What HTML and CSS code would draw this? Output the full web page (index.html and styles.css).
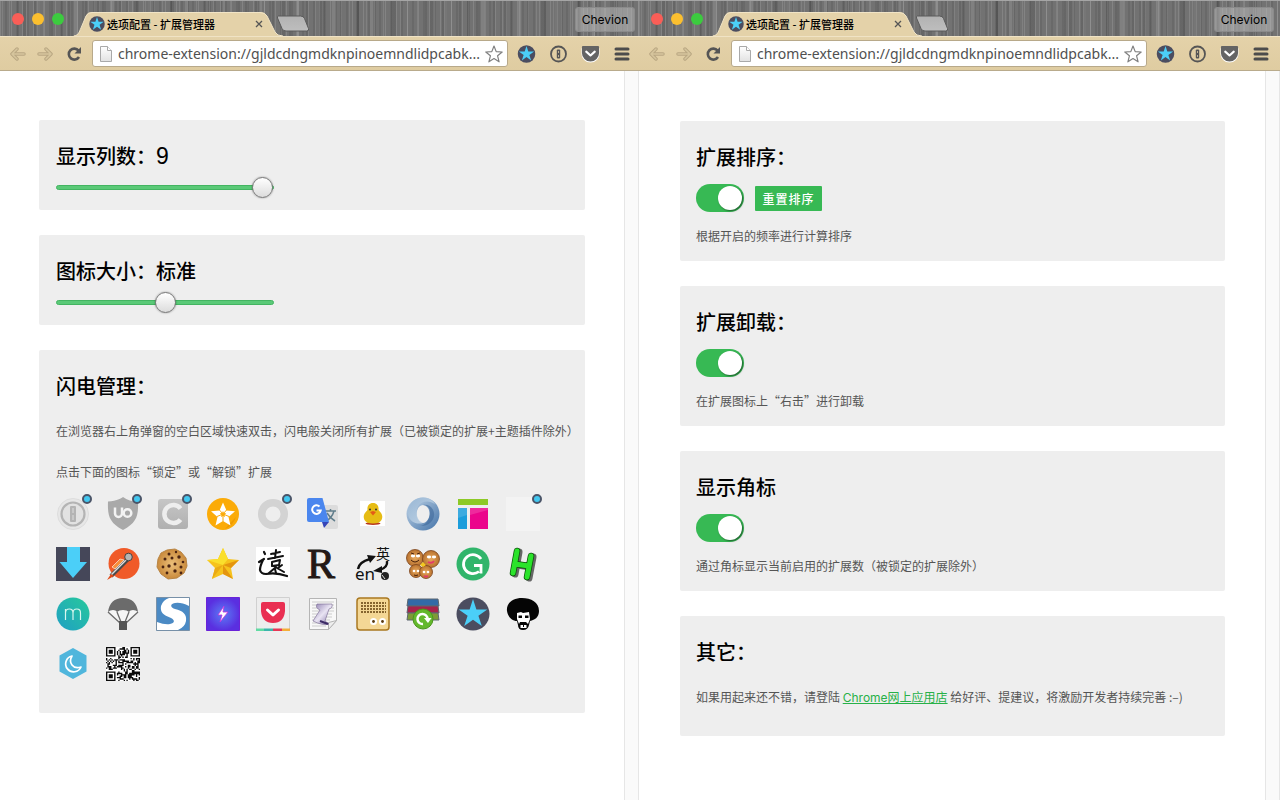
FILE: index.html
```html
<!DOCTYPE html>
<html lang="zh-CN">
<head>
<meta charset="utf-8">
<meta name="viewport" content="width=device-width, initial-scale=1">
<title>选项配置 - 扩展管理器</title>
<link rel="stylesheet" href="styles.css">
</head>
<body>
<svg class="defs" aria-hidden="true">
  <defs>
    <linearGradient id="g-page" x1="0" y1="0" x2="0" y2="1"><stop offset="0" stop-color="#fff"/><stop offset="1" stop-color="#e2e2e2"/></linearGradient>
    <linearGradient id="g-ring" x1="0" y1="0" x2="1" y2="1"><stop offset="0" stop-color="#c3d6e8"/><stop offset="1" stop-color="#4373a8"/></linearGradient>
    <linearGradient id="g-ring2" x1="0" y1="0" x2="1" y2="1"><stop offset="0" stop-color="#8fb0d0"/><stop offset="1" stop-color="#dbe8f3"/></linearGradient>
    <linearGradient id="g-m" x1="0" y1="1" x2="1" y2="0"><stop offset="0" stop-color="#1f9fc4"/><stop offset="1" stop-color="#27c99b"/></linearGradient>
    <radialGradient id="g-bolt"><stop offset="0" stop-color="#5b7df5"/><stop offset="1" stop-color="#5a2fe0"/></radialGradient>
    <linearGradient id="g-gray" x1="0" y1="0" x2="0" y2="1"><stop offset="0" stop-color="#c6c6c6"/><stop offset="1" stop-color="#b0b0b0"/></linearGradient>
    <radialGradient id="g-cookie"><stop offset="0" stop-color="#ecc07a"/><stop offset="1" stop-color="#c98a3c"/></radialGradient>
    <radialGradient id="g-face"><stop offset="0" stop-color="#e8a85c"/><stop offset="1" stop-color="#b8722f"/></radialGradient>
    <linearGradient id="g-scroll" x1="0" y1="0" x2="1" y2="1"><stop offset="0" stop-color="#8e7fb0"/><stop offset=".5" stop-color="#e9e4f3"/><stop offset="1" stop-color="#7a6aa0"/></linearGradient>
    <linearGradient id="g-newtab" x1="0" y1="0" x2="0" y2="1"><stop offset="0" stop-color="#b2b2b2"/><stop offset="1" stop-color="#bebebe"/></linearGradient>
  </defs>
  <symbol id="star-badge" viewBox="0 0 34 34">
    <circle cx="17" cy="17" r="16.500" fill="#4b4d60"/>
    <path fill="#4bcff8" d="M17 2l3.400 10.400h10.900l-8.900 6.400 3.400 10.300L17 22.700l-8.800 6.400 3.400-10.300-8.900-6.400h10.900z"/>
  </symbol>
  <symbol id="tab-shape" viewBox="0 0 210 24">
    <path fill="#e4d2a9" d="M0 24C6 23 6 20 8 16L13 4Q14.500 0 19 0H187Q192 0 194 4L202 20Q204 24 210 24Z"/>
    <path fill="none" stroke="#f1e4c6" d="M1 24C6 23 6 20 8 16L13 4Q14.500 .5 19 .5H187Q192 .5 194 4L202 20Q204 24 210 24"/>
  </symbol>
  <symbol id="new-tab" viewBox="0 0 34 18">
    <path fill="url(#g-newtab)" stroke="#5a5a5a" d="M2.500 1h22q3 0 4 2.500l4 10q1 2.500-2 2.500H10q-3 0-4-2.500L1.500 3Q1 1 2.500 1z"/>
  </symbol>
  <symbol id="arrow-left" viewBox="0 0 16 14">
    <path fill="none" stroke="#b9a782" stroke-width="3.500" stroke-linecap="round" stroke-linejoin="round" d="M7 2L2 7l5 5M3 7h11"/>
    <path fill="none" stroke="#d6c59d" stroke-width="1.500" stroke-linecap="round" stroke-linejoin="round" d="M7 2L2 7l5 5M3 7h11"/>
  </symbol>
  <symbol id="reload" viewBox="0 0 16 16">
    <path fill="none" stroke="#555" stroke-width="2.600" d="M12.600 4.600A5.500 5.500 0 1 0 13 11"/>
    <path fill="#555" d="M15 1v6.500H8.500z"/>
  </symbol>
  <symbol id="page-icon" viewBox="0 0 12 16">
    <path fill="url(#g-page)" stroke="#a9a9a9" d="M.5.500h7l4 4v11H.5z"/><path fill="#fff" stroke="#a9a9a9" d="M7.500.500v4h4"/>
  </symbol>
  <symbol id="bookmark" viewBox="0 0 18 18">
    <path fill="#fff" stroke="#808080" stroke-width="1.200" stroke-linejoin="round" d="M9 1l2.200 5.600 6 .4-4.600 3.800 1.500 6L9 13.500 3.900 16.800l1.500-6L.8 7l6-.4z"/>
  </symbol>
  <symbol id="onepass" viewBox="0 0 18 18">
    <circle cx="9" cy="9" r="7.500" fill="none" stroke="#555" stroke-width="1.800"/><rect x="7.300" y="4.500" width="3.400" height="9" rx="1" fill="#555"/><path d="M9 6v2M9 10v2" stroke="#d8c69e" stroke-width=".8"/>
  </symbol>
  <symbol id="pocket-bar" viewBox="0 0 20 18">
    <path fill="#fff" d="M.5 3h19v6a9.500 9 0 0 1-19 0z"/><path fill="#646464" d="M1 1.500Q1 .5 2 .5h16q1 0 1 1V8a9 9 0 0 1-18 0z"/><path fill="none" stroke="#fff" stroke-width="2.200" stroke-linecap="round" stroke-linejoin="round" d="M5.500 6.500L10 10.500l4.500-4"/>
  </symbol>
  <symbol id="menu" viewBox="0 0 16 14"><path stroke="#4c4c4c" stroke-width="3" stroke-linecap="round" d="M2 2h12M2 7h12M2 12h12"/></symbol>
</svg>

<main class="desktop">
  <section class="window window-left">
    <header class="titlebar">
      <div class="lights"><span class="light red"></span><span class="light yellow"></span><span class="light green"></span></div>
      <div class="tab">
        <svg class="tab-bg"><use href="#tab-shape"/></svg>
        <svg class="favicon"><use href="#star-badge"/></svg>
        <span class="tab-title">选项配置 - 扩展管理器</span>
        <button class="tab-close" aria-label="关闭标签页"><svg viewBox="0 0 8 8"><path d="M1 1l6 6M7 1L1 7" stroke="#555" stroke-width="1.300"/></svg></button>
      </div>
      <button class="new-tab" aria-label="新标签页"><svg><use href="#new-tab"/></svg></button>
      <button class="profile">Chevion</button>
    </header>
    <nav class="toolbar">
      <button class="nav" aria-label="后退"><svg><use href="#arrow-left"/></svg></button>
      <button class="nav forward" aria-label="前进"><svg><use href="#arrow-left"/></svg></button>
      <button class="reload" aria-label="重新加载"><svg><use href="#reload"/></svg></button>
      <div class="omnibox">
        <svg class="page-icon"><use href="#page-icon"/></svg>
        <input class="url" type="text" aria-label="地址" value="chrome-extension://gjldcdngmdknpinoemndlidpcabk..." readonly>
        <button class="bookmark" aria-label="收藏"><svg><use href="#bookmark"/></svg></button>
      </div>
      <div class="extensions">
        <button class="ext" aria-label="扩展管理器"><svg><use href="#star-badge"/></svg></button>
        <button class="ext" aria-label="1Password"><svg><use href="#onepass"/></svg></button>
        <button class="ext" aria-label="Pocket"><svg><use href="#pocket-bar"/></svg></button>
        <button class="menu" aria-label="菜单"><svg><use href="#menu"/></svg></button>
      </div>
    </nav>
    <div class="viewport">
      <div class="page">
        <section class="card slider-card">
          <h2><label for="columns">显示列数：<span class="number">9</span></label></h2>
          <input class="slider" id="columns" type="range" min="1" max="9" value="9">
        </section>
        <section class="card slider-card">
          <h2><label for="size">图标大小：标准</label></h2>
          <input class="slider" id="size" type="range" min="0" max="2" value="1">
        </section>
        <section class="card icons-card">
          <h2>闪电管理：</h2>
          <p>在浏览器右上角弹窗的空白区域快速双击，闪电般关闭所有扩展（已被锁定的扩展+主题插件除外）</p>
          <p>点击下面的图标“锁定”或“解锁”扩展</p>
          <div class="icons">
            <button class="app" aria-label="1Password"><svg viewBox="0 0 34 34"><circle cx="17" cy="17" r="15.500" fill="#e7e7e7" stroke="#ddd"/><circle cx="17" cy="17" r="11.500" fill="#e2e2e2" stroke="#b4b4b4" stroke-width="2.200"/><rect x="14" y="9" width="6" height="16" rx="1" fill="#b4b4b4"/><path d="M17 11v5M17 18v5" stroke="#ddd"/></svg><span class="lock"></span></button>
            <button class="app" aria-label="uBlock"><svg viewBox="0 0 34 34"><path fill="#a9a9a9" d="M17 0q6 4.500 15 4.500c.5 14-1 21-15 28.500C3 25.500 1.500 18.500 2 4.500 11 4.500 17 0 17 0z"/><path fill="none" stroke="#f3f3f3" stroke-width="2.500" d="M9 10.500v6a3.500 3.500 0 0 0 7 0v-6"/><circle cx="21.500" cy="16" r="3.800" fill="none" stroke="#f3f3f3" stroke-width="2.500"/></svg><span class="lock"></span></button>
            <button class="app" aria-label="C"><svg viewBox="0 0 34 34"><rect x="2" y="2" width="30" height="30" rx="3" fill="url(#g-gray)"/><path fill="none" stroke="#eee" stroke-width="4.500" d="M24.500 11.500a9 9 0 1 0 0 11"/></svg><span class="lock"></span></button>
            <button class="app" aria-label="星标"><svg viewBox="0 0 34 34"><circle cx="17" cy="17" r="16" fill="#fbab08"/><path fill="#ef9b00" d="M24 26l6-6q-3 9-11 12z"/><path fill="#fff" d="M17 5.500l3.500 8 8.500.8-6.500 5.700 2 8.500L17 24l-7.500 4.500 2-8.500L5 14.300l8.500-.8z"/><path stroke="#fbab08" stroke-width="1" d="M17 17l-4-4.500M17 17l4-4.500M17 17l6 2.500M17 17v7.500M17 17l-6 2.500"/><path fill="#fbab08" d="M17 14l1 2 2.200.3-1.600 1.500.4 2.200-2-1-2 1 .4-2.200-1.600-1.500 2.200-.3z"/></svg></button>
            <button class="app" aria-label="圆环"><svg viewBox="0 0 34 34"><circle cx="17" cy="17" r="11.300" fill="none" stroke="#d3d3d3" stroke-width="7.500"/></svg><span class="lock"></span></button>
            <button class="app" aria-label="翻译"><svg viewBox="0 0 34 34"><path fill="#dcdcdc" d="M17 8h13q2 0 2 2v20q0 2-2 2H19z"/><path fill="none" stroke="#607d8b" stroke-width="1.500" d="M19 14h11M24.500 12v2M28 14q-2 7-8 10M21 16q3 5 8 8"/><path fill="#4a86ee" d="M3 1h13.500L23 25H3q-2 0-2-2V3q0-2 2-2z"/><path fill="#3545b8" d="M16 25h7l-5 6z"/><path fill="none" stroke="#fff" stroke-width="2" d="M13.500 9.500a4.300 4.300 0 1 0 1.200 4H10.500"/></svg></button>
            <button class="app" aria-label="小鸭"><svg viewBox="0 0 34 34"><path fill="#fff" d="M4 4h25v25H4z"/><ellipse cx="17" cy="26.500" rx="7.500" ry="1.500" fill="#b8381e"/><path fill="#e6bc14" d="M17 6c4 0 6 3 5.500 7 3 3 5 6 3 10q-2 3.500-8.500 3.500T8.500 23c-2-4 0-7 3-10C11 9 13 6 17 6z"/><circle cx="14" cy="12.500" r="1" fill="#333"/><circle cx="20" cy="12.500" r="1" fill="#333"/><path fill="#e35b18" d="M14 15l3-1 3 1-3 3.500z"/></svg></button>
            <button class="app" aria-label="JSON"><svg viewBox="0 0 34 34"><path fill="url(#g-ring)" fill-rule="evenodd" d="M17 .5a16.500 16.500 0 1 0 0 33 16.500 16.500 0 0 0 0-33zM17 8c5 1 6.500 5 6.500 9S21 25.500 17 26c-4-.5-6.500-5-6.500-9S13 8 17 8z"/><path fill="url(#g-ring2)" d="M17 .5c6 0 10 3 12 7-6-5-14-3-17 2-3 6-1 14 5 16.500-6 2-14-1-15-9C1 8 8 .5 17 .5z" opacity=".8"/><path fill="#40699b" d="M17 8c7 0 9 8 5 15-2 4-6 6-9 6 9 1 16-5 15-13-1-6-6-9-11-8z" opacity=".6"/></svg></button>
            <button class="app" aria-label="布局"><svg viewBox="0 0 34 34"><path fill="#8dc926" d="M2 2h30v6H2z"/><path fill="#1b9ddb" d="M2 11h9v21H2z"/><path fill="#eb058c" d="M14 11h18v21H14z"/><path fill="#fff" opacity=".15" d="M2 11h9v7l-9 3zM14 11h18v2l-18 5z"/></svg></button>
            <button class="app" aria-label="空白"><svg viewBox="0 0 34 34"><path fill="#f3f3f3" d="M0 0h34v34H0z"/></svg><span class="lock"></span></button>

            <button class="app" aria-label="下载"><svg viewBox="0 0 34 34"><path fill="#454759" d="M0 0h34v34H0z"/><path fill="#4bcff8" d="M11 0h13v15h7L17 31 3.500 15H11z"/></svg></button>
            <button class="app" aria-label="Postman"><svg viewBox="0 0 34 34"><circle cx="18" cy="16.500" r="15.500" fill="#f05a28"/><path stroke="#4a4a4a" stroke-width="4" d="M5 29L22 12"/><path stroke="#ddd" stroke-width="1.500" d="M5 28L22 11"/><path fill="#f7903c" stroke="#fff" stroke-width=".6" d="M6 20l8-8 4 1-9 9z"/><circle cx="22.500" cy="10" r="3.800" fill="#b5b5b5" stroke="#444"/><path fill="#e04a18" d="M1 33l4-6 3 2z"/></svg></button>
            <button class="app" aria-label="Cookie"><svg viewBox="0 0 34 34"><path fill="url(#g-cookie)" stroke="#b98544" d="M11 3l8-1 6 3 5 6 1 8-3 7-7 5-9 1-7-5-4-7 1-8 3-6z"/><g fill="#4b2412"><circle cx="13" cy="7" r="1.500"/><circle cx="20" cy="5" r="1.200"/><circle cx="9" cy="12" r="1.500"/><circle cx="16" cy="11" r="1.500"/><circle cx="23" cy="10" r="1.700"/><circle cx="27" cy="15" r="1.300"/><circle cx="13" cy="19" r="1.700"/><circle cx="19" cy="17" r="1.500"/><circle cx="25" cy="20" r="1.500"/><circle cx="7" cy="20" r="1.400"/><circle cx="19" cy="24" r="1.700"/><circle cx="11" cy="26" r="1.400"/><circle cx="25" cy="26" r="1.400"/></g></svg></button>
            <button class="app" aria-label="收藏星"><svg viewBox="0 0 34 34"><path fill="#f6c21c" d="M17 1l5 11 11 1-8 8 2 11-10-5-11 5 3-11-8-8 11-1z"/><path fill="#fadf2c" d="M17 1l5 11-5 6-5-6zM17 18L1 13l11-1z"/><path fill="#e4950f" d="M33 13L17 18l8 3zM17 18l10 14-10-5z"/><path fill="#eaaa14" d="M17 18L6 32l3-11z"/></svg></button>
            <button class="app" aria-label="远"><svg viewBox="0 0 34 34"><path fill="#fff" d="M0 0h34v34H0z"/><g fill="none" stroke="#111" stroke-linecap="round" stroke-linejoin="round"><path stroke-width="2.200" d="M8 5l1 2M3 15l5-3M7 13q-3 6-3 10 1 4 6 4 10-2 21 2"/><path stroke-width="2" d="M15 7l9-2M20 3l-1 8M12 12l15-3M16 15l8-2-1 5-7 1zM20 20l-7 6M19 22l1 4M21 21l7 4M26 18l-4 3"/></g></svg></button>
            <button class="app" aria-label="R"><svg viewBox="0 0 34 34"><text class="glyph-r" x="1" y="31">R</text></svg></button>
            <button class="app" aria-label="英语"><svg viewBox="0 0 34 34"><text class="glyph-cjk" x="20" y="12">英</text><text class="glyph-en" x="-1" y="33">en</text><path fill="none" stroke="#111" stroke-width="2.400" d="M2 22q1-7 12-10M31 14q1 6-7 9"/><path fill="#111" d="M11 8l9 1-6 7zM26 19l-9 5 9 2z"/><circle cx="29" cy="29" r="4" fill="#222"/><path stroke="#ddd" d="M26 28l3 4"/></svg></button>
            <button class="app" aria-label="饼干一家"><svg viewBox="0 0 34 34"><g fill="url(#g-face)" stroke="#7b431b" stroke-width=".8"><circle cx="9" cy="11" r="8.500"/><circle cx="25" cy="12" r="8.500"/><circle cx="10" cy="24" r="6.500"/><circle cx="20" cy="25" r="6.500"/></g><g fill="#fff"><ellipse cx="7" cy="9" rx="2.200" ry="1.400"/><ellipse cx="12" cy="9" rx="2.200" ry="1.400"/><ellipse cx="23" cy="10" rx="2.200" ry="1.400"/><ellipse cx="28" cy="10" rx="2.200" ry="1.400"/><circle cx="8" cy="24" r="1.300"/><circle cx="12" cy="24" r="1.300"/><circle cx="18" cy="25" r="1.300"/><circle cx="22" cy="25" r="1.300"/></g><path fill="none" stroke="#48210a" d="M5 13q4 4 8 0M8 28q2 1 4 0M5 6l3 1M14 6l-3 1"/><path fill="none" stroke="#e23a6a" stroke-width="1.800" d="M22 15q4 2 6-1M18 29q2 1 4 0"/><path fill="#f3c71f" d="M14 18l3-3 3 3-3 2z"/></svg></button>
            <button class="app" aria-label="Grammarly"><svg viewBox="0 0 34 34"><circle cx="17" cy="17" r="16.500" fill="#31b56b"/><path fill="none" stroke="#fff" stroke-width="2.800" d="M25 12a9.500 9.500 0 1 0-2 12.500M18 18.500h7v8"/></svg></button>
            <button class="app" aria-label="H"><svg viewBox="0 0 34 34"><g fill="none" stroke-linecap="round" stroke-linejoin="round"><path stroke="#666" stroke-width="7" d="M13 5L9 27M27 10l-4 21M11 18l14 2"/><path stroke="#0a500a" stroke-width="6.500" d="M11 4L7 26M25 9l-4 21M9 17l14 2"/><path stroke="#2be32b" stroke-width="5" d="M11 4L7 26M25 9l-4 21M9 17l14 2"/></g></svg></button>

            <button class="app" aria-label="Momentum"><svg viewBox="0 0 34 34"><circle cx="17" cy="17" r="16.500" fill="url(#g-m)"/><path fill="none" stroke="#d8f6ee" stroke-width="1.200" d="M9.500 23V12M9.500 16q0-4 3.800-4t3.700 4v7M17 16q0-4 3.800-4t3.700 4v7"/></svg></button>
            <button class="app" aria-label="降落伞"><svg viewBox="0 0 34 34"><path fill="#f6f6f6" d="M2 15l11 10h8l11-10q-6-3-15-3T2 15z"/><path fill="#6b6b6b" d="M2 15Q4 1 17 1t15 14q-2-2-5-2t-4 2q-2-2-6-2t-6 2q-1-2-4-2t-5 2z"/><path fill="none" stroke="#6b6b6b" stroke-width="1.300" d="M2 15l12 11M11 15l4 10M23 15l-4 10M32 15L20 26"/><rect x="13" y="24" width="8" height="9" fill="#555"/></svg></button>
            <button class="app" aria-label="S"><svg viewBox="0 0 34 34"><path fill="#4b8ac4" stroke="#7790a8" d="M.5.500h33v33H.5z"/><path fill="#fff" d="M33 1v8q-8-4-14-3c-6 1-4 5 0 6 8 2 12 5 11 12q-1 6-8 9H1v-8q8 3 13 2c5-1 5-4 1-6C7 18 4 15 5 9q2-6 8-8z"/></svg></button>
            <button class="app" aria-label="闪电"><svg viewBox="0 0 34 34"><path fill="url(#g-bolt)" stroke="#6a22d8" d="M.5.500h33v33H.5z"/><path fill="#fff" stroke="#c52ee0" stroke-width=".8" d="M18 9l-6 9h4l-2 7 8-10h-5z"/></svg></button>
            <button class="app" aria-label="Pocket"><svg viewBox="0 0 34 34"><path fill="#ededed" stroke="#d0d0d0" d="M.5.500h33v33H.5z"/><path fill="#e92f52" d="M5 7q0-2 2-2h20q2 0 2 2v7q-1 12-12 12T5 14z"/><path fill="none" stroke="#fff" stroke-width="3" stroke-linecap="round" stroke-linejoin="round" d="M11.500 13l5.500 5 5.500-5"/><path fill="#60dba3" d="M0 31.500h8V34H0z"/><path fill="#3ab5ac" d="M8 31.500h9V34H8z"/><path fill="#e63755" d="M17 31.500h9V34h-9z"/><path fill="#f4ae38" d="M26 31.500h8V34h-8z"/></svg></button>
            <button class="app" aria-label="脚本"><svg viewBox="0 0 34 34"><path fill="#f8f8f8" stroke="#b5b5b5" d="M3.500 1.500h27v22l-8 9h-19z"/><path stroke="#ccc" d="M6 5h22M6 8h22M6 11h22M6 14h22M6 17h20M6 20h20M6 23h18M6 26h16M6 29h14"/><path fill="#eee" stroke="#b5b5b5" d="M22.500 32.500v-7l8-2z"/><path fill="url(#g-scroll)" stroke="#75678f" stroke-width=".6" d="M11 7h15q1 4-3 5L19 24l4 3q-6 2-16-3l7-11q-5-2-3-6z"/><path stroke="#3d2c66" stroke-width="2" d="M14 24l8 3"/></svg></button>
            <button class="app" aria-label="收音机"><svg viewBox="0 0 34 34"><rect x="1" y="1" width="32" height="32" rx="3" fill="#f4d795" stroke="#a97821" stroke-width="1.500"/><path stroke="#86652f" stroke-width="2" stroke-dasharray="2 1" d="M5 6h25M5 9h25M5 12h25M5 15h25"/><circle cx="17.500" cy="24.500" r="3.500" fill="#fff"/><circle cx="26.500" cy="24.500" r="3.500" fill="#fff"/><circle cx="17.500" cy="24.500" r="1.400" fill="#5a3a10"/><circle cx="26.500" cy="24.500" r="1.400" fill="#5a3a10"/></svg></button>
            <button class="app" aria-label="会话"><svg viewBox="0 0 34 34"><path fill="#326aa7" stroke="#5d6670" d="M2 2h30l1 7H1z"/><path fill="#a7234a" stroke="#5d6670" d="M2 9h30l1 7H1z"/><path fill="#7e9a36" stroke="#5d6670" d="M2 16h30l1 7H1z"/><circle cx="17" cy="22" r="10" fill="#64b82c" stroke="#4b951d"/><path fill="none" stroke="#fff" stroke-width="2.500" d="M17 27a5 5 0 1 1 4.500-5"/><path fill="#fff" d="M18 21h7.500L22 26z"/></svg></button>
            <button class="app" aria-label="扩展管理器"><svg><use href="#star-badge"/></svg></button>
            <button class="app" aria-label="爆炸头"><svg viewBox="0 0 34 34"><path fill="#050505" d="M1 14C0 6 7 1 16 1s17 4 17 13c0 6-4 9-9 10l-1 4q-1 5-6 5t-5-5l-1-4C6 24 2 20 1 14z"/><path fill="#fff" d="M11 16l4-1 2 1 6-1 1 7-2 5-2-2h-6l-1 2-2-5z"/><path fill="#050505" d="M12.500 18.500h3.500V21h-3.500zM19 18.500h3.500V21H19z"/><path fill="#fff" d="M14.500 28h6v3h-6z"/><path fill="#050505" d="M17 28h1v2h-1z"/></svg></button>

            <button class="app" aria-label="月亮"><svg viewBox="0 0 34 34"><path fill="#50b6dc" d="M17 1l13.500 7.500v16L17 32 3.500 24.500v-16z"/><path fill="none" stroke="#fff" stroke-width="1.700" stroke-linejoin="round" d="M16 9a8 8 0 1 0 9 11q-6 2-9-2t0-9z"/></svg></button>
            <button class="app" aria-label="二维码"><svg viewBox="0 0 25 25"><path fill="#fff" d="M0 0h25v25H0z"/><path id="qr" fill="#0a0a0a" d=""/></svg></button>
          </div>
        </section>
      </div>
      <div class="scrollbar"></div>
    </div>
  </section>

  <section class="window window-right">
    <header class="titlebar">
      <div class="lights"><span class="light red"></span><span class="light yellow"></span><span class="light green"></span></div>
      <div class="tab">
        <svg class="tab-bg"><use href="#tab-shape"/></svg>
        <svg class="favicon"><use href="#star-badge"/></svg>
        <span class="tab-title">选项配置 - 扩展管理器</span>
        <button class="tab-close" aria-label="关闭标签页"><svg viewBox="0 0 8 8"><path d="M1 1l6 6M7 1L1 7" stroke="#555" stroke-width="1.300"/></svg></button>
      </div>
      <button class="new-tab" aria-label="新标签页"><svg><use href="#new-tab"/></svg></button>
      <button class="profile">Chevion</button>
    </header>
    <nav class="toolbar">
      <button class="nav" aria-label="后退"><svg><use href="#arrow-left"/></svg></button>
      <button class="nav forward" aria-label="前进"><svg><use href="#arrow-left"/></svg></button>
      <button class="reload" aria-label="重新加载"><svg><use href="#reload"/></svg></button>
      <div class="omnibox">
        <svg class="page-icon"><use href="#page-icon"/></svg>
        <input class="url" type="text" aria-label="地址" value="chrome-extension://gjldcdngmdknpinoemndlidpcabk..." readonly>
        <button class="bookmark" aria-label="收藏"><svg><use href="#bookmark"/></svg></button>
      </div>
      <div class="extensions">
        <button class="ext" aria-label="扩展管理器"><svg><use href="#star-badge"/></svg></button>
        <button class="ext" aria-label="1Password"><svg><use href="#onepass"/></svg></button>
        <button class="ext" aria-label="Pocket"><svg><use href="#pocket-bar"/></svg></button>
        <button class="menu" aria-label="菜单"><svg><use href="#menu"/></svg></button>
      </div>
    </nav>
    <div class="viewport">
      <div class="page">
        <section class="card">
          <h2><label for="sort">扩展排序：</label></h2>
          <div class="controls"><input class="toggle" id="sort" type="checkbox" checked><button class="reset">重置排序</button></div>
          <p>根据开启的频率进行计算排序</p>
        </section>
        <section class="card">
          <h2><label for="uninstall">扩展卸载：</label></h2>
          <div class="controls"><input class="toggle" id="uninstall" type="checkbox" checked></div>
          <p>在扩展图标上“右击”进行卸载</p>
        </section>
        <section class="card">
          <h2><label for="badge">显示角标</label></h2>
          <div class="controls"><input class="toggle" id="badge" type="checkbox" checked></div>
          <p>通过角标显示当前启用的扩展数（被锁定的扩展除外）</p>
        </section>
        <section class="card other-card">
          <h2>其它：</h2>
          <p>如果用起来还不错，请登陆 <a href="#">Chrome网上应用店</a> 给好评、提建议，将激励开发者持续完善 :–)</p>
        </section>
      </div>
      <div class="scrollbar"></div>
    </div>
  </section>
</main>
<script src="qr.js"></script>
</body>
</html>
```
FILE: styles.css
```css
* { box-sizing: border-box; }

body {
  margin: 0;
  background: #fff;
  color: #000;
  font-family: "Noto Sans CJK SC", sans-serif;
}

button {
  display: block;
  margin: 0;
  padding: 0;
  border: 0;
  background: none;
  font: inherit;
  flex: none;
}

button svg { display: block; width: 100%; height: 100%; }
svg { overflow: visible; }

.defs { display: block; width: 0; height: 0; overflow: hidden; }

.desktop {
  display: grid;
  grid-template-columns: 639fr 641fr;
  min-height: 100vh;
}

.window {
  display: flex;
  flex-direction: column;
  min-width: 0;
}

.window-left {
  --edge: 4px;
  --card-x: 17px;
  --page-pad: 49px 39px;
}

.window-right {
  --edge: 6px;
  --card-x: 16px;
  --page-pad: 50px 40px 49px 41px;
}

.titlebar {
  display: flex;
  align-items: flex-end;
  height: 36px;
  padding: 0 var(--edge) 0 12px;
  border-top: 1px solid #a5a5a5;
  background:
    repeating-linear-gradient(90deg, rgba(255,255,255,.12) 0 1px, transparent 1px 5px, rgba(0,0,0,.08) 5px 7px, transparent 7px 11px),
    repeating-linear-gradient(90deg, rgba(0,0,0,.1) 0 2px, transparent 2px 9px, rgba(255,255,255,.1) 9px 10px, transparent 10px 17px),
    repeating-linear-gradient(90deg, rgba(255,255,255,.1) 0 3px, transparent 3px 23px, rgba(0,0,0,.1) 23px 26px, transparent 26px 37px),
    #727272;
}

.lights { display: flex; gap: 8px; padding-bottom: 11px; }
.light { width: 12px; height: 12px; border-radius: 50%; }
.red { background: #f95e57; }
.yellow { background: #fbbf2f; }
.green { background: #3ccb3f; }

.tab {
  position: relative;
  display: flex;
  align-items: center;
  width: 210px;
  height: 24px;
  margin-left: 9px;
  padding: 0 20px 0 16px;
}

.tab-bg { position: absolute; inset: 0; width: 100%; height: 100%; }
.favicon { position: relative; width: 16px; height: 16px; flex: none; }

.tab-title {
  position: relative;
  flex: 1;
  margin-left: 2px;
  font-size: 11px;
  line-height: 16px;
  font-weight: 500;
  white-space: nowrap;
}

.tab-close { position: relative; width: 8px; height: 8px; }
.new-tab { width: 34px; height: 18px; margin: 0 0 3px -7px; }

.profile {
  width: 60px;
  height: 25px;
  margin: 0 0 4px auto;
  border: 1px solid #8b8b8b;
  border-radius: 3px;
  background: rgba(190,190,190,.5);
  font-family: Inter, sans-serif;
  font-size: 12px;
}

.toolbar {
  display: flex;
  align-items: center;
  height: 35px;
  padding: 0 calc(var(--edge) + 4px) 0 10px;
  border-top: 1px solid #f0e3c5;
  border-bottom: 1px solid #b9ab8c;
  background: linear-gradient(#e4d2a9, #dfcca1);
}

.nav { width: 16px; height: 14px; margin-right: 11px; }
.forward { transform: scaleX(-1); }
.reload { width: 16px; height: 16px; margin: 0 10px 0 2px; }

.omnibox {
  display: flex;
  align-items: center;
  flex: 1;
  min-width: 0;
  height: 27px;
  padding: 0 4px 0 7px;
  border: 1px solid #b8a98a;
  border-radius: 3px;
  background: #fff;
}

.page-icon { width: 12px; height: 16px; flex: none; }

.url {
  flex: 1;
  min-width: 0;
  height: 24px;
  margin-left: 6px;
  padding: 0;
  border: 0;
  outline: 0;
  background: none;
  color: #505050;
  font-family: "Noto Sans", sans-serif;
  font-size: 14px;
}

.bookmark { width: 18px; height: 18px; }

.extensions { display: flex; align-items: center; gap: 13px; margin-left: 9px; }
.ext { width: 19px; height: 18px; }
.menu { width: 18px; height: 14px; padding: 0 1px; }

.viewport { display: flex; flex: 1; }
.page {
  display: flex;
  flex: 1;
  flex-direction: column;
  gap: 25px;
  min-width: 0;
  padding: var(--page-pad);
}

.scrollbar {
  width: 15px;
  border: 1px solid #e6e6e6;
  border-width: 0 1px;
  background: #fafafa;
}

.card {
  padding: 22px 4px 15px var(--card-x);
  border-radius: 2px;
  background: #eee;
}
.slider-card { padding-bottom: 12px; }
.icons-card { padding-bottom: 32px; }
.other-card { padding-bottom: 28px; }

h2 { margin: 0; font-size: 20px; font-weight: 500; line-height: 28px; }
.number { font-family: "Liberation Sans", Arial, sans-serif; font-size: 23px; font-weight: 400; line-height: 24px; }

p { margin: 14px 0 0; color: #555; font-size: 12px; line-height: 20px; }
.icons-card p, .other-card p { margin-top: 21px; }

a { color: #27b148; font-family: Inter, "Noto Sans CJK SC", sans-serif; }

.slider {
  display: block;
  width: 218px;
  height: 21px;
  margin: 7px 0 0;
  appearance: none;
  background: none;
}

.slider::-webkit-slider-runnable-track {
  height: 5px;
  border: 1px solid #43b461;
  border-radius: 3px;
  background: #5ac977;
}

.slider::-webkit-slider-thumb {
  width: 21px;
  height: 21px;
  margin-top: -9px;
  appearance: none;
  border: 1px solid #777;
  border-radius: 50%;
  background: linear-gradient(#fff, #dcdcdc);
  box-shadow: 0 0 2px rgba(0,0,0,.4);
}

.controls { display: flex; align-items: center; gap: 11px; margin-top: 13px; }

.toggle {
  width: 48px;
  height: 28px;
  margin: 0;
  padding: 2px;
  appearance: none;
  border-radius: 14px;
  background: #37b954;
}

.toggle::before {
  content: "";
  display: block;
  width: 24px;
  height: 24px;
  margin-left: 20px;
  border-radius: 50%;
  background: #fff;
  box-shadow: 1px 1px 2px rgba(0,0,0,.5);
}

.reset {
  width: 67px;
  height: 25px;
  border-radius: 1px;
  background: #37b954;
  color: #fff;
  font-size: 12px;
  font-weight: 500;
  letter-spacing: 1px;
}

.icons {
  display: grid;
  grid-template-columns: repeat(auto-fill, 34px);
  gap: 16px;
  max-width: 500px;
  margin-top: 15px;
}

.app { position: relative; width: 34px; height: 34px; }

.lock {
  position: absolute;
  top: -3px;
  right: -2px;
  width: 10px;
  height: 10px;
  border: 2px solid #4a5468;
  border-radius: 50%;
  background: #43c8f0;
}

.glyph-r { font: 42px "Liberation Serif", serif; fill: #231815; stroke: #231815; }
.glyph-cjk { font: 14px "Noto Sans CJK SC", sans-serif; fill: #111; }
.glyph-en { font: 17px "Noto Sans", sans-serif; fill: #111; }
```
FILE: qr.js
```js
// Builds a 25x25 module pattern with three finder squares.
(function () {
  var size = 25, seed = 7, d = "";
  function finder(x, y) {
    var ring = Math.max(Math.abs(x - 3), Math.abs(y - 3));
    return ring > 3 ? false : ring !== 2;
  }
  for (var y = 0; y < size; y++) {
    for (var x = 0; x < size; x++) {
      seed = (seed * 1103515245 + 12345) % 2147483648;
      var on = (seed >> 16) % 2 === 0;
      if (x < 8 && y < 8) on = finder(x, y);
      else if (x > 16 && y < 8) on = finder(x - 18, y);
      else if (x < 8 && y > 16) on = finder(x, y - 18);
      if (on) d += "M" + x + " " + y + "h1v1h-1z";
    }
  }
  document.getElementById("qr").setAttribute("d", d);
})();
```
